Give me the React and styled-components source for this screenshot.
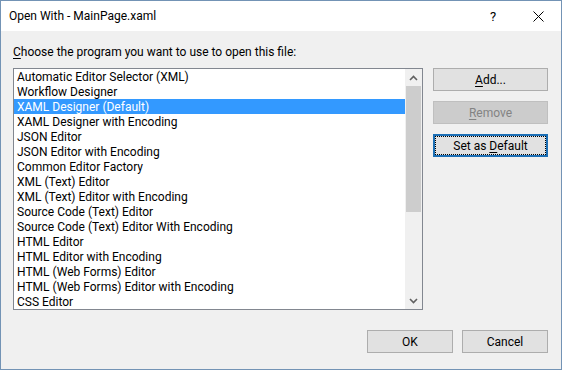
import React from "react";
import styled, { createGlobalStyle } from "styled-components";

const Global = createGlobalStyle`
  html, body { margin: 0; padding: 0; background: #f0f0f0; }
  body { font-family: Roboto, "Noto Sans", sans-serif; font-size: 12px; color: #000; }
  * { box-sizing: border-box; }
`;

const Window = styled.div`
  width: 562px;
  height: 370px;
  border: 1px solid #7393b5;
  background: #f0f0f0;
  display: flex;
  flex-direction: column;
`;

const TitleBar = styled.div`
  height: 30px;
  background: #fff;
  display: flex;
  align-items: center;
  padding-left: 8px;
  flex: none;
`;

const Title = styled.div`
  flex: 1;
  font-size: 12px;
  line-height: 15px;
  padding-top: 1px;
`;

const Help = styled.div`
  width: 20px;
  font-size: 13px;
  margin-right: 12px;
  text-align: center;
  padding-top: 1px;
`;

const Close = styled.div`
  width: 46px;
  display: flex;
  justify-content: center;
  align-items: center;
`;

const Body = styled.div`
  flex: 1;
  display: flex;
  flex-direction: column;
  padding: 13px 13px 0 12px;
`;

const Label = styled.div`
  height: 15px;
  line-height: 15px;
  padding-top: 1px;
  margin-bottom: 9px;
`;

const Key = styled.span`
  text-decoration: underline;
  text-underline-offset: 2px;
`;

const Main = styled.div`
  display: flex;
  gap: 10px;
  height: 242px;
`;

const List = styled.div`
  width: 410px;
  height: 242px;
  border: 1px solid #828790;
  background: #fff;
  display: flex;
`;

const Items = styled.div`
  flex: 1;
  overflow: hidden;
`;

const Item = styled.div`
  height: 15px;
  line-height: 15px;
  padding: 1px 0 0 3px;
  white-space: nowrap;
  background: ${(p) => (p.$selected ? "#3399ff" : "transparent")};
  color: ${(p) => (p.$selected ? "#fff" : "#000")};
`;

const ScrollBar = styled.div`
  width: 17px;
  background: #f0f0f0;
  display: flex;
  flex-direction: column;
`;

const Arrow = styled.div`
  height: 17px;
  display: flex;
  align-items: center;
  justify-content: center;
  flex: none;
`;

const Thumb = styled.div`
  height: 126px;
  margin: 0 1px;
  background: #cdcdcd;
  flex: none;
`;

const Track = styled.div`
  flex: 1;
`;

const Side = styled.div`
  width: 115px;
  display: flex;
  flex-direction: column;
  gap: 10px;
`;

const Button = styled.div`
  height: 23px;
  width: ${(p) => p.$w || "115px"};
  display: flex;
  align-items: center;
  justify-content: center;
  padding-top: 1px;
  background: ${(p) => (p.$disabled ? "#cccccc" : "#e1e1e1")};
  border: ${(p) => (p.$default ? "2px solid #1c6fb5" : p.$disabled ? "1px solid #bfbfbf" : "1px solid #adadad")};
  color: ${(p) => (p.$disabled ? "#838383" : "#000")};
  outline: ${(p) => (p.$default ? "1px dotted #000" : "none")};
  outline-offset: -3px;
  line-height: 15px;
`;

const Footer = styled.div`
  display: flex;
  justify-content: flex-end;
  gap: 9px;
  margin-top: 20px;
`;

const items = [
  "Automatic Editor Selector (XML)",
  "Workflow Designer",
  "XAML Designer (Default)",
  "XAML Designer with Encoding",
  "JSON Editor",
  "JSON Editor with Encoding",
  "Common Editor Factory",
  "XML (Text) Editor",
  "XML (Text) Editor with Encoding",
  "Source Code (Text) Editor",
  "Source Code (Text) Editor With Encoding",
  "HTML Editor",
  "HTML Editor with Encoding",
  "HTML (Web Forms) Editor",
  "HTML (Web Forms) Editor with Encoding",
  "CSS Editor",
];

const Chevron = ({ up }) => (
  <svg width="9" height="6" viewBox="0 0 9 6">
    <path
      d={up ? "M1 5 L4.5 1.5 L8 5" : "M1 1 L4.5 4.5 L8 1"}
      fill="none"
      stroke="#606060"
      strokeWidth="1.6"
    />
  </svg>
);

export default function App() {
  return (
    <>
      <Global />
      <Window>
        <TitleBar>
          <Title>Open With - MainPage.xaml</Title>
          <Help>?</Help>
          <Close>
            <svg width="11" height="11" viewBox="0 0 11 11">
              <path d="M0.5 0.5 L10.5 10.5 M10.5 0.5 L0.5 10.5" stroke="#000" strokeWidth="1" />
            </svg>
          </Close>
        </TitleBar>
        <Body>
          <Label>
            <Key>C</Key>hoose the program you want to use to open this file:
          </Label>
          <Main>
            <List>
              <Items>
                {items.map((t, i) => (
                  <Item key={t} $selected={i === 2}>
                    {t}
                  </Item>
                ))}
              </Items>
              <ScrollBar>
                <Arrow>
                  <Chevron up />
                </Arrow>
                <Thumb />
                <Track />
                <Arrow>
                  <Chevron />
                </Arrow>
              </ScrollBar>
            </List>
            <Side>
              <Button>
                <span>
                  <Key>A</Key>dd...
                </span>
              </Button>
              <Button $disabled>
                <span>
                  <Key>R</Key>emove
                </span>
              </Button>
              <Button $default>
                <span>
                  Set as <Key>D</Key>efault
                </span>
              </Button>
            </Side>
          </Main>
          <Footer>
            <Button $w="86px">OK</Button>
            <Button $w="86px">Cancel</Button>
          </Footer>
        </Body>
      </Window>
    </>
  );
}
